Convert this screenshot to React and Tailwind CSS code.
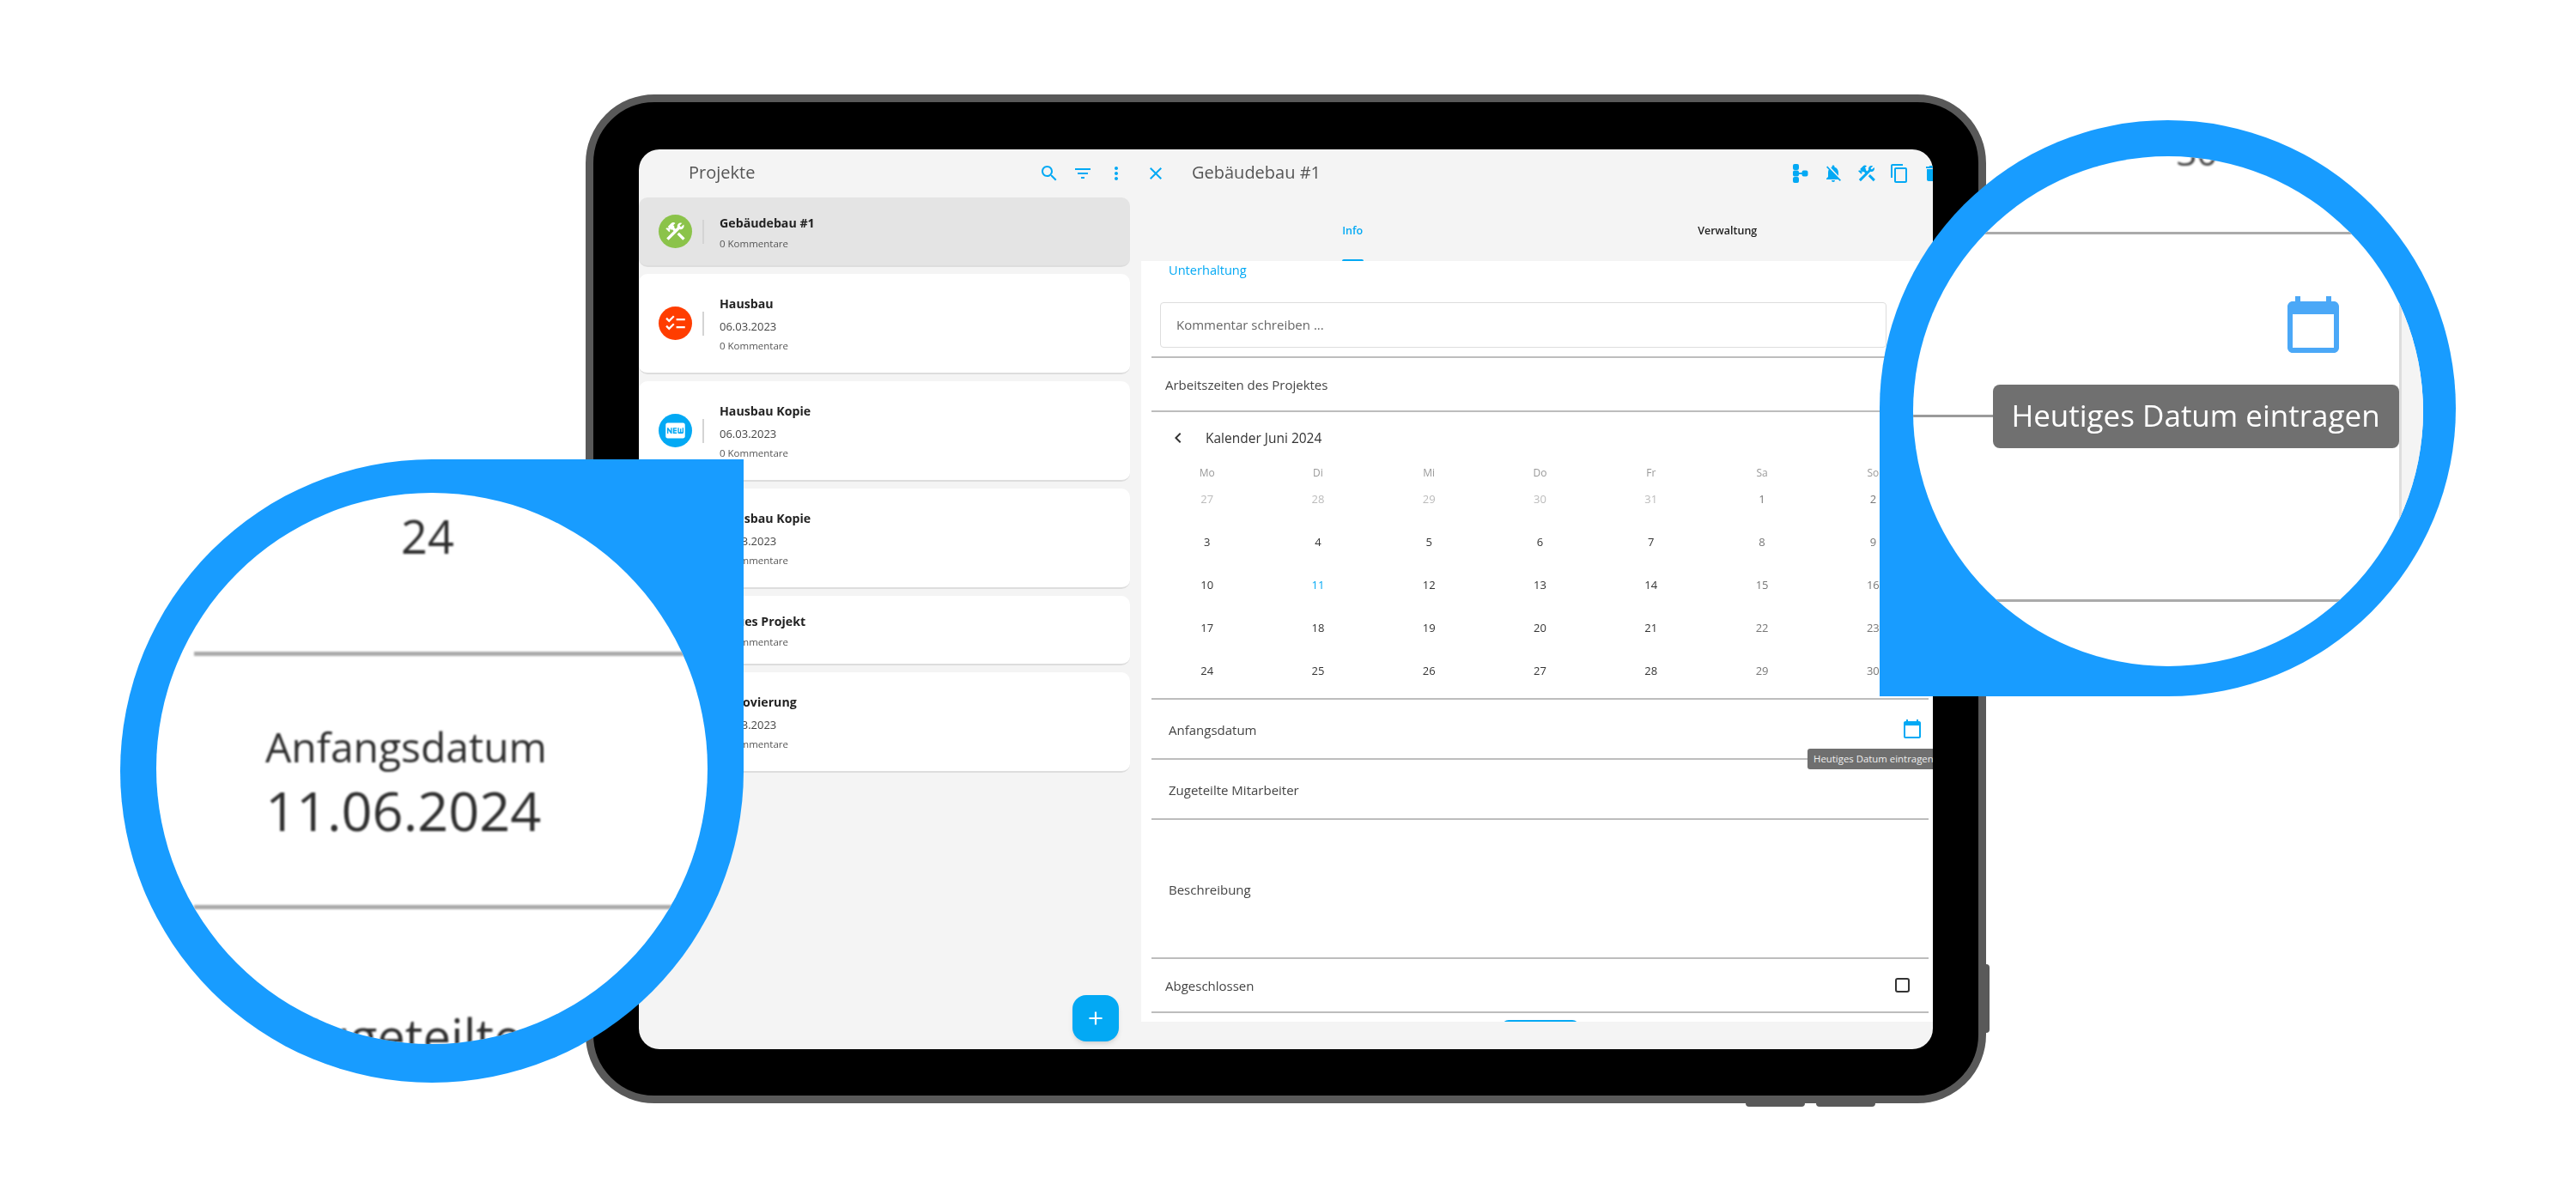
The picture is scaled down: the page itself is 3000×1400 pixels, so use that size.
import React from 'react'

const font = { fontFamily: '"Open Sans", "Noto Sans", sans-serif' }

const paths = {
    search: 'M15.5 14h-.79l-.28-.27C15.41 12.59 16 11.11 16 9.5 16 5.91 13.09 3 9.5 3S3 5.91 3 9.5 5.91 16 9.5 16c1.61 0 3.09-.59 4.23-1.57l.27.28v.79l5 4.99L20.49 19l-4.99-5zm-6 0C7.01 14 5 11.99 5 9.5S7.01 5 9.5 5 14 7.01 14 9.5 11.99 14 9.5 14z',
    filter: 'M10 18h4v-2h-4v2zM3 6v2h18V6H3zm3 7h12v-2H6v2z',
    more: 'M12 8c1.1 0 2-.9 2-2s-.9-2-2-2-2 .9-2 2 .9 2 2 2zm0 2c-1.1 0-2 .9-2 2s.9 2 2 2 2-.9 2-2-.9-2-2-2zm0 6c-1.1 0-2 .9-2 2s.9 2 2 2 2-.9 2-2-.9-2-2-2z',
    close: 'M19 6.41L17.59 5 12 10.59 6.41 5 5 6.41 10.59 12 5 17.59 6.41 19 12 13.41 17.59 19 19 17.59 13.41 12z',
    bellOff: 'M20 18.69L7.84 6.14 5.27 3.49 4 4.76l2.8 2.8v.01c-.52.99-.8 2.16-.8 3.42v5l-2 2v1h13.73l2 2L21 19.72l-1-1.03zM12 22c1.11 0 2-.89 2-2h-4c0 1.11.89 2 2 2zm6-7.32V11c0-3.08-1.64-5.64-4.5-6.32V4c0-.83-.67-1.5-1.5-1.5s-1.5.67-1.5 1.5v.68c-.15.03-.29.08-.42.12-.1.03-.2.07-.3.11h-.01c-.2.08-.4.17-.59.27-.01 0-.01 0-.02.01L18 14.68z',
    tools: 'm13.7826 15.1719 2.1213-2.1213 5.9963 5.9962-2.1213 2.1213zM17.5 10c1.93 0 3.5-1.57 3.5-3.5 0-.58-.16-1.12-.41-1.6l-2.7 2.7-1.49-1.49 2.7-2.7c-.48-.25-1.02-.41-1.6-.41C15.57 3 14 4.57 14 6.5c0 .41.08.8.21 1.16l-1.85 1.85-1.78-1.78.71-.71-1.41-1.41L12 3.49c-1.17-1.17-3.07-1.17-4.24 0L4.22 7.03l1.41 1.41H2.81l-.71.71 3.54 3.54.71-.71V9.15l1.41 1.41.71-.71 1.78 1.78-7.41 7.41 2.12 2.12L16.34 9.79c.36.13.75.21 1.16.21z',
    copy: 'M16 1H4c-1.1 0-2 .9-2 2v14h2V3h12V1zm3 4H8c-1.1 0-2 .9-2 2v14c0 1.1.9 2 2 2h11c1.1 0 2-.9 2-2V7c0-1.1-.9-2-2-2zm0 16H8V7h11v14z',
    trash: 'M6 19c0 1.1.9 2 2 2h8c1.1 0 2-.9 2-2V7H6v12zM19 4h-3.5l-1-1h-5l-1 1H5v2h14V4z',
    tree: 'M5 1h3a2 2 0 0 1 2 2v3a2 2 0 0 1-2 2H5a2 2 0 0 1-2-2V3a2 2 0 0 1 2-2zM5 8.5h3a2 2 0 0 1 2 2v3a2 2 0 0 1-2 2H5a2 2 0 0 1-2-2v-3a2 2 0 0 1 2-2zM5 16h3a2 2 0 0 1 2 2v3a2 2 0 0 1-2 2H5a2 2 0 0 1-2-2v-3a2 2 0 0 1 2-2zM15.5 8.5h3a2 2 0 0 1 2 2v3a2 2 0 0 1-2 2h-3a2 2 0 0 1-2-2v-3a2 2 0 0 1 2-2zM9 11h5v2H9z',
    chevron: 'M15.41 7.41L14 6l-6 6 6 6 1.41-1.41L10.83 12z',
    calendar: 'M20 3h-1V1h-2v2H7V1H5v2H4c-1.1 0-2 .9-2 2v16c0 1.1.9 2 2 2h16c1.1 0 2-.9 2-2V5c0-1.1-.9-2-2-2zm0 18H4V8h16v13z',
    add: 'M19 13h-6v6h-2v-6H5v-2h6V5h2v6h6v2z',
    checklist: 'M22 7h-9v2h9V7zm0 8h-9v2h9v-2zM5.54 11 2 7.46l1.41-1.41 2.12 2.12 4.24-4.24 1.41 1.41L5.54 11zm0 8L2 15.46l1.41-1.41 2.12 2.12 4.24-4.24 1.41 1.41L5.54 19z',
    fiberNew: 'M20 4H4c-1.11 0-1.99.89-1.99 2L2 18c0 1.11.89 2 2 2h16c1.11 0 2-.89 2-2V6c0-1.11-.89-2-2-2zM8.5 15H7.3l-2.55-3.5V15H3.5V9h1.25l2.5 3.5V9H8.5v6zm5-4.74H11v1.12h2.5v1.26H11v1.11h2.5V15h-4V9h4v1.26zm7 3.74c0 .55-.45 1-1 1h-4c-.55 0-1-.45-1-1V9h1.25v4.51h1.13V9.99h1.25v3.51h1.12V9h1.25v5z',
}

const Icon = ({ name, className }) => (
    <svg viewBox="0 0 24 24" fill="currentColor" className={className}>
        <path d={paths[name]} />
    </svg>
)

const projects = [
    { title: 'Gebäudebau #1', icon: 'tools', color: 'bg-[#8bc34a]', active: true },
    { title: 'Hausbau', date: '06.03.2023', icon: 'checklist', color: 'bg-[#ff3d00]' },
    { title: 'Hausbau Kopie', date: '06.03.2023', icon: 'fiberNew', color: 'bg-[#03a9f4]' },
    { title: 'Hausbau Kopie', date: '06.03.2023', icon: 'fiberNew', color: 'bg-[#03a9f4]' },
    { title: 'Neues Projekt', icon: 'fiberNew', color: 'bg-[#03a9f4]' },
    { title: 'Renovierung', date: '06.03.2023', icon: 'checklist', color: 'bg-[#ff3d00]' },
]

const weeks = [
    [27, 28, 29, 30, 31, 1, 2],
    [3, 4, 5, 6, 7, 8, 9],
    [10, 11, 12, 13, 14, 15, 16],
    [17, 18, 19, 20, 21, 22, 23],
    [24, 25, 26, 27, 28, 29, 30],
]

const ProjectCard = ({ project }) => (
    <div className={`flex items-center rounded-[10px] border-b-2 border-[#dddddd] pl-[23px] ${project.active ? 'bg-[#e4e4e4]' : 'bg-white'} ${project.date ? 'h-[117px]' : 'h-[81px]'}`}>
        <div className={`flex h-[39px] w-[39px] items-center justify-center rounded-full text-white ${project.color}`}>
            <Icon name={project.icon} className="h-[27px] w-[27px]" />
        </div>
        <div className="ml-3 h-7 w-0.5 bg-[#d4d4d4]" />
        <div className="ml-[18px] flex flex-col pt-0.5">
            <span className="text-[14.2px] leading-5 font-bold text-[#222222]">{project.title}</span>
            {project.date && <span className="mt-1.5 text-[13px] leading-5 text-[#444444]">{project.date}</span>}
            <span className={`text-[11.5px] leading-4 text-[#555555] ${project.date ? 'mt-[5px]' : 'mt-1.5'}`}>0 Kommentare</span>
        </div>
    </div>
)

const ProjectList = () => (
    <div className="flex w-[585px] shrink-0 flex-col">
        <div className="flex h-14 shrink-0 items-center pl-[58px] pr-[17px]">
            <span className="-mt-0.5 text-[20px] text-[#555555]">Projekte</span>
            <div className="ml-auto flex gap-[15px] text-[#03a9f4]">
                <Icon name="search" className="h-6 w-6" />
                <Icon name="filter" className="h-6 w-6" />
                <Icon name="more" className="h-6 w-6" />
            </div>
        </div>
        <div className="relative flex-1 pr-[13px]">
            <div className="flex flex-col gap-2">
                {projects.map((project, i) => (
                    <ProjectCard key={i} project={project} />
                ))}
            </div>
            <button className="absolute right-[26px] bottom-[9px] flex h-[54px] w-[54px] items-center justify-center rounded-2xl bg-[#03a9f4] text-white shadow-md">
                <Icon name="add" className="h-[26px] w-[26px]" />
            </button>
        </div>
    </div>
)

const Calendar = () => (
    <div className="pb-1.5">
        <div className="flex h-[60px] items-center pl-[19px] text-[15.5px] text-[#333333]">
            <Icon name="chevron" className="h-6 w-6" />
            <span className="mt-0.5 ml-5">Kalender Juni 2024</span>
        </div>
        <div className="mt-[5px] grid h-3 grid-cols-7 text-center text-[12px] leading-3 text-[#999999]">
            {['Mo', 'Di', 'Mi', 'Do', 'Fr', 'Sa', 'So'].map(day => (
                <span key={day}>{day}</span>
            ))}
        </div>
        {weeks.map((week, w) => (
            <div key={w} className="grid h-[50px] grid-cols-7 items-center text-center text-[13px]">
                {week.map((day, d) => {
                    let color = 'text-[#333333]'
                    if (w === 0 && d < 5) color = 'text-[#bbbbbb]'
                    else if (d >= 5) color = 'text-[#777777]'
                    else if (day === 11) color = 'text-[#03a9f4]'
                    return <span key={d} className={color}>{day}</span>
                })}
            </div>
        ))}
    </div>
)

const Row = ({ className, children }) => (
    <div className={`relative flex items-center border-b-2 border-[#bdbdbd] text-[15px] text-[#444444] ${className}`}>
        {children}
    </div>
)

const ProjectDetail = () => (
    <div className="flex min-w-0 flex-1 flex-col">
        <div className="flex h-14 shrink-0 items-center pl-[5px] text-[#03a9f4]">
            <Icon name="close" className="h-6 w-6 shrink-0" />
            <span className="-mt-0.5 ml-[30px] text-[20px] text-[#555555]">Gebäudebau #1</span>
            <div className="ml-auto -mr-[11px] flex shrink-0 gap-[14.25px]">
                <Icon name="tree" className="h-6 w-6 shrink-0" />
                <Icon name="bellOff" className="h-6 w-6 shrink-0" />
                <Icon name="tools" className="h-6 w-6 shrink-0" />
                <Icon name="copy" className="h-6 w-6 shrink-0" />
                <Icon name="trash" className="h-6 w-6 shrink-0" />
            </div>
        </div>
        <div className="ml-7 mr-[21px] grid h-[74px] shrink-0 grid-cols-2 text-[12.5px]">
            <div className="flex flex-col items-center font-semibold text-[#03a9f4]">
                <span className="mt-[29px] leading-5">Info</span>
                <div className="mt-auto h-0.5 w-[25px] rounded-t bg-[#03a9f4]" />
            </div>
            <div className="flex flex-col items-center font-semibold text-[#222222]">
                <span className="mt-[29px] leading-5">Verwaltung</span>
            </div>
        </div>
        <div className="mb-8 min-h-0 flex-1 overflow-hidden bg-white">
            <div className="pl-8 text-[14.6px] leading-5 text-[#03a9f4]">Unterhaltung</div>
            <div className="mt-7 ml-[22px] flex h-[53px] w-[846px] items-center rounded border border-[#dddddd] pl-[18px] text-[15px] text-[#666666]">
                Kommentar schreiben ...
            </div>
            <div className="ml-3 mr-[5px]">
                <Row className="mt-2.5 h-0" />
                <Row className="h-[63px] pt-0.5 pl-4">Arbeitszeiten des Projektes</Row>
                <Row>
                    <div className="w-full"><Calendar /></div>
                </Row>
                <Row className="h-[70px] pt-0.5 pl-5">
                    Anfangsdatum
                    <Icon name="calendar" className="-mt-0.5 ml-auto mr-[7px] h-6 w-6 text-[#03a9f4]" />
                    <div className="absolute top-[57px] left-[764px] z-10 flex h-6 items-center rounded-[3px] bg-[#6f6f6f] px-[7px] text-[11.4px] whitespace-nowrap text-[#f0f0f0]">
                        Heutiges Datum eintragen
                    </div>
                </Row>
                <Row className="h-[70px] pt-0.5 pl-5">Zugeteilte Mitarbeiter</Row>
                <Row className="h-[162px] pt-0.5 pl-5">Beschreibung</Row>
                <Row className="h-[63px] pt-0.5 pl-4">
                    Abgeschlossen
                    <div className="-mt-0.5 ml-auto mr-[22px] h-[17px] w-[17px] rounded-[3px] border-2 border-[#333333]" />
                </Row>
            </div>
            <div className="mt-2 ml-[420px] h-10 w-[90px] rounded-t-lg bg-[#03a9f4]" />
        </div>
    </div>
)

const Tablet = () => (
    <div className="relative h-[1175px] w-[1631px] rounded-[80px] border-[9px] border-[#595959] bg-black pt-[55px] pr-[53px] pb-[54px] pl-[53px]">
        <div className="flex h-full overflow-hidden rounded-3xl bg-[#f4f4f4] blur-[0.35px]">
            <ProjectList />
            <ProjectDetail />
        </div>
        <div className="absolute top-[1004px] -right-[13px] h-20 w-1 rounded-r bg-[#595959]" />
        <div className="absolute -bottom-[13px] left-[1342px] h-1 w-[69px] rounded-b bg-[#595959]" />
        <div className="absolute -bottom-[13px] left-[1424px] h-1 w-[69px] rounded-b bg-[#595959]" />
    </div>
)

const LeftMagnifier = () => (
    <div className="absolute top-[535px] left-[140px] h-[726px] w-[726px] rounded-[50%_0_50%_50%] bg-[#189cff] pt-[39px] pl-[42px]">
        <div className="h-[642px] w-[642px] overflow-hidden rounded-full bg-white text-[#2e2e2e]">
            <div className="mt-[20px] ml-[285px] h-[60px] text-[54px] leading-[60px] blur-[1px]">24</div>
            <div className="mt-[105px] ml-11 h-[5px] bg-[#aaaaaa] blur-[1px]" />
            <div className="mt-[76px] ml-[127px] text-[48px] leading-[60px] blur-[1px]">Anfangsdatum</div>
            <div className="mt-[9px] ml-[127px] text-[63px] leading-[70px] blur-[1px]">11.06.2024</div>
            <div className="mt-[75px] ml-11 h-[5px] bg-[#aaaaaa] blur-[1px]" />
            <div className="mt-[113px] ml-[157px] text-[58px] leading-[70px] whitespace-nowrap blur-[1px]">Zugeteilte</div>
        </div>
    </div>
)

const RightMagnifier = () => (
    <div className="absolute top-[140px] left-[2189px] h-[671px] w-[671px] rounded-[50%_50%_50%_0] bg-[#189cff] pt-[41.5px] pl-[38.5px]">
        <div className="flex h-[594px] w-[594px] overflow-hidden rounded-full bg-white">
            <div className="w-[566px] shrink-0">
                <div className="-mt-[26px] ml-[307px] h-[42px] text-[42px] leading-[42px] text-[#444444] blur-[1px]">30</div>
                <div className="mt-[72px] h-[3px] bg-[#aaaaaa] blur-[0.5px]" />
                <Icon name="calendar" className="mt-[69px] ml-[430px] h-[72px] w-[72px] text-[#4ba8f7]" />
                <div className="mt-[34px] flex h-[74px] items-center">
                    <div className="h-[3px] flex-1 bg-[#9a9a9a] blur-[0.5px]" />
                    <div className="flex h-[74px] w-[473px] items-center justify-center rounded-lg bg-[#707070] text-[35px] text-white">
                        <span className="blur-[0.6px]">Heutiges Datum eintragen</span>
                    </div>
                </div>
                <div className="mt-[176.5px] h-[3px] bg-[#aaaaaa] blur-[0.5px]" />
            </div>
            <div className="flex-1 border-l-[3px] border-[#dddddd] bg-[#f4f4f4]" />
        </div>
    </div>
)

export default function App() {
    return (
        <div style={font} className="relative h-[1400px] w-[3000px] overflow-hidden bg-white pt-[110px] pl-[682px]">
            <Tablet />
            <LeftMagnifier />
            <RightMagnifier />
        </div>
    )
}
